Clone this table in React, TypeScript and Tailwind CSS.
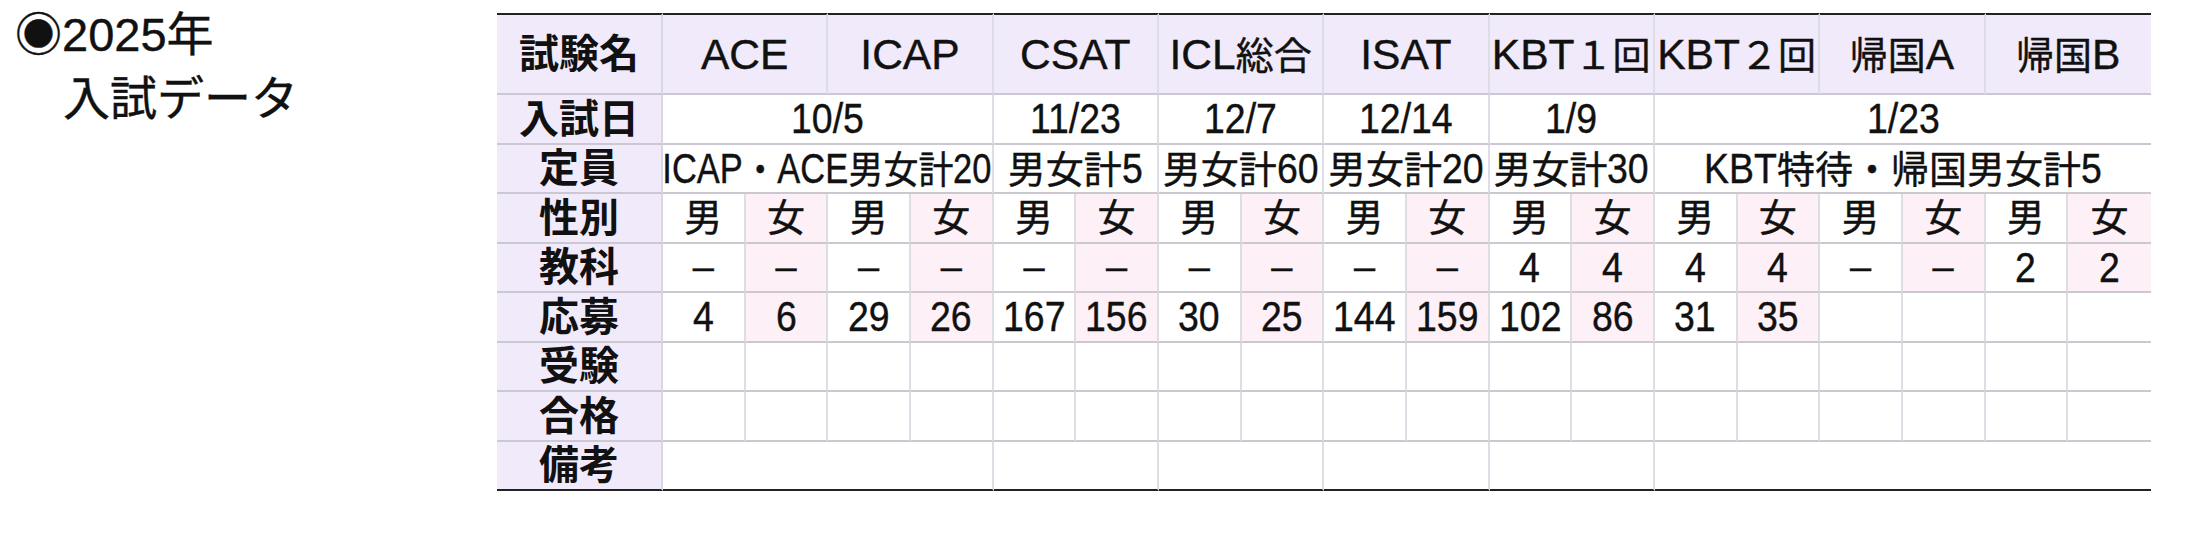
import React from "react";

type Cell = { text?: string; span?: number; squeeze?: boolean };

const EXAMS = ["ACE", "ICAP", "CSAT", "ICL総合", "ISAT", "KBT１回", "KBT２回", "帰国A", "帰国B"];

const DATES: Cell[] = [
  { text: "10/5", span: 4 },
  { text: "11/23", span: 2 },
  { text: "12/7", span: 2 },
  { text: "12/14", span: 2 },
  { text: "1/9", span: 2 },
  { text: "1/23", span: 6 },
];

const QUOTA: Cell[] = [
  { text: "ICAP・ACE男女計20", span: 4, squeeze: true },
  { text: "男女計5", span: 2 },
  { text: "男女計60", span: 2 },
  { text: "男女計20", span: 2 },
  { text: "男女計30", span: 2 },
  { text: "KBT特待・帰国男女計5", span: 6 },
];

const SUBJECTS = ["–", "–", "–", "–", "–", "–", "–", "–", "–", "–", "4", "4", "4", "4", "–", "–", "2", "2"];
const APPLIED = ["4", "6", "29", "26", "167", "156", "30", "25", "144", "159", "102", "86", "31", "35", "", "", "", ""];

// rough Arial advance widths (em) used to pull condensed latin runs back together
const W: Record<string, number> = {
  "/": 0.278, I: 0.278, C: 0.722, A: 0.667, P: 0.667, E: 0.667, S: 0.667, T: 0.611, L: 0.556, K: 0.667, B: 0.667,
};

function Txt({ s, condensed = true }: { s: string; condensed?: boolean }) {
  const parts = s.split(/([\x21-\x7e]+)/);
  return (
    <>
      {parts.map((p, i) => {
        if (!p) return null;
        if (!/^[\x21-\x7e]+$/.test(p)) return p;
        const w = [...p].reduce((a, c) => a + (W[c] ?? 0.556), 0);
        return condensed ? (
          <span
            key={i}
            className="inline-block origin-left scale-x-[0.88] text-[1.12em]"
            style={{ marginRight: `${-0.12 * w}em` }}
          >
            {p}
          </span>
        ) : (
          <span key={i} className="text-[1.12em]">
            {p}
          </span>
        );
      })}
    </>
  );
}

const font = "font-['Liberation_Sans','Noto_Sans_CJK_JP',sans-serif]";
const stroke = "[-webkit-text-stroke:0.4px_#111]";
const labelBase =
  "bg-[#f1eafb] text-center p-0 font-bold text-[40px] [-webkit-text-stroke:0px] border-r-2 border-r-[#d6d7e0] border-b-2";
const cellBase = "text-center p-0 border-b-2 border-r-2 border-r-[#dcdde5] last:border-r-0 whitespace-nowrap";
const gray = "border-b-[#cbc8d1]";
const black = "border-b-[#222]";

function SexCells({ values, pinkAll }: { values: string[]; pinkAll?: boolean }) {
  return (
    <>
      {values.map((v, i) => {
        const pink = i % 2 === 1 && (pinkAll || v !== "");
        return (
          <td key={i} className={`${cellBase} ${gray} ${pink ? "bg-[#fdf0f7]" : "bg-white"}`}>
            {v && <Txt s={v} />}
          </td>
        );
      })}
    </>
  );
}

function SpanCells({ cells, last }: { cells: Cell[]; last?: boolean }) {
  return (
    <>
      {cells.map((c, i) => (
        <td key={i} colSpan={c.span} className={`${cellBase} bg-white ${last ? black : gray}`}>
          {c.text &&
            (c.squeeze ? (
              // too long for its cell: squeezed to fit, like the source
              <div className="flex justify-center">
                <span className="inline-block shrink-0 scale-x-[0.92]">
                  <Txt s={c.text} />
                </span>
              </div>
            ) : (
              <Txt s={c.text} />
            ))}
        </td>
      ))}
    </>
  );
}

export default function App() {
  const sexes = Array.from({ length: 18 }, (_, i) => (i % 2 === 0 ? "男" : "女"));
  const blank = Array.from({ length: 18 }, () => "");
  const row = "h-[49.5px]";

  return (
    <div className={`flex items-start bg-white w-[2210px] h-[560px] text-[#111] ${font}`}>
      {/* title */}
      <div className={`w-[497px] shrink-0 pl-[15px] pt-[3px] text-[47px] leading-[64px] ${stroke}`}>
        <div>◉2025年</div>
        <div className="pl-[48px]">入試データ</div>
      </div>

      {/* table */}
      <table className={`mt-[13px] w-[1654px] table-fixed border-separate border-spacing-0 text-[38px] leading-none ${stroke}`}>
        <colgroup>
          <col className="w-[166px]" />
          {sexes.map((_, i) => (
            <col key={i} />
          ))}
        </colgroup>
        <tbody>
          <tr className="h-[82px]">
            <td className={`${labelBase} ${gray} border-t-2 border-t-[#222]`}>試験名</td>
            {EXAMS.map((e) => (
              <td
                key={e}
                colSpan={2}
                className={`${cellBase} ${gray} bg-[#f1eafb] border-t-2 border-t-[#222]`}
              >
                <Txt s={e} condensed={false} />
              </td>
            ))}
          </tr>
          <tr className={row}>
            <td className={`${labelBase} ${gray}`}>入試日</td>
            <SpanCells cells={DATES} />
          </tr>
          <tr className={row}>
            <td className={`${labelBase} ${gray}`}>定員</td>
            <SpanCells cells={QUOTA} />
          </tr>
          <tr className={row}>
            <td className={`${labelBase} ${gray}`}>性別</td>
            <SexCells values={sexes} pinkAll />
          </tr>
          <tr className={row}>
            <td className={`${labelBase} ${gray}`}>教科</td>
            <SexCells values={SUBJECTS} pinkAll />
          </tr>
          <tr className={row}>
            <td className={`${labelBase} ${gray}`}>応募</td>
            <SexCells values={APPLIED} />
          </tr>
          <tr className={row}>
            <td className={`${labelBase} ${gray}`}>受験</td>
            <SexCells values={blank} />
          </tr>
          <tr className={row}>
            <td className={`${labelBase} ${gray}`}>合格</td>
            <SexCells values={blank} />
          </tr>
          <tr className={row}>
            <td className={`${labelBase} ${black}`}>備考</td>
            <SpanCells cells={DATES.map((d) => ({ span: d.span }))} last />
          </tr>
        </tbody>
      </table>
    </div>
  );
}
